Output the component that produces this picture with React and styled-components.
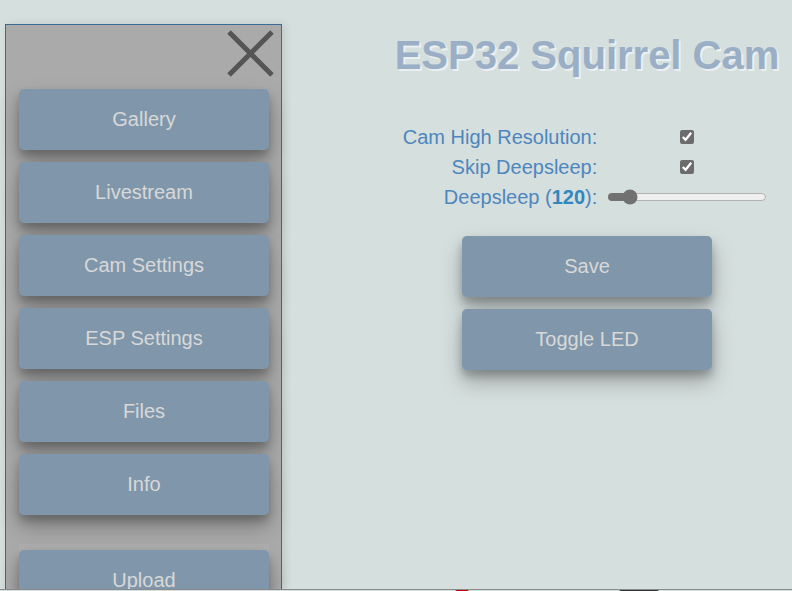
import React from "react";
import styled, { createGlobalStyle } from "styled-components";

const GlobalStyle = createGlobalStyle`
  html, body {
    margin: 0;
    padding: 0;
    background: #d5dfde;
    font-family: "Liberation Sans", Arial, sans-serif;
    overflow: hidden;
  }
`;

const Frame = styled.div`
  display: flex;
  height: 589px;
  overflow: hidden;
`;

const SideNav = styled.nav`
  flex: 0 0 277px;
  box-sizing: border-box;
  margin: 24px 0 0 5px;
  background: #aaaaaa;
  border: 1px solid #3b6a96;
  border-bottom: none;
  box-shadow: 3px 0 8px rgba(0, 0, 0, 0.1);
  display: flex;
  flex-direction: column;
  align-items: flex-start;
  padding: 0 12px 0 13px;

  & > * {
    flex-shrink: 0;
  }
`;

const NavHeader = styled.div`
  align-self: stretch;
  height: 64px;
  display: flex;
  justify-content: flex-end;
  align-items: flex-start;
  padding: 4px 0 0;
  margin-right: -6px;
  box-sizing: border-box;
`;

const CloseButton = styled.button`
  border: none;
  background: none;
  padding: 0;
  width: 49px;
  height: 49px;
  cursor: pointer;
`;

const Button = styled.button`
  width: 250px;
  height: 61px;
  flex: 0 0 61px;
  border: none;
  border-radius: 5px;
  background: #8097ab;
  color: #d8d8d8;
  font-family: "Liberation Sans", Arial, sans-serif;
  font-size: 20px;
  box-shadow: 0 12px 22px rgba(0, 0, 0, 0.26), 0 6px 8px rgba(0, 0, 0, 0.22);
  cursor: pointer;
  margin-bottom: ${props => (props.last ? "0" : "12px")};
`;

const UploadForm = styled.form`
  margin-top: 29px;
  padding-top: 6px;
  width: 250px;
  background: #adadad;
  display: flex;
  flex-direction: column;
`;

const Main = styled.main`
  flex: 1;
  padding-left: 100px;
  display: flex;
  flex-direction: column;
  align-items: center;
`;

const Title = styled.h1`
  margin: 32px 0 0;
  font-size: 40px;
  line-height: 46px;
  font-weight: bold;
  color: #9aafc5;
  text-shadow: 2px 2px 0 #eaeff1;
  white-space: nowrap;
`;

const SettingsGrid = styled.div`
  margin: 44px 4px 0 0;
  display: grid;
  grid-template-columns: auto 160px;
  column-gap: 10px;
  align-items: center;
`;

const Label = styled.label`
  text-align: right;
  font-size: 20px;
  line-height: 30px;
  color: #4e86bd;
  white-space: nowrap;

  b {
    color: #2f88bf;
  }
`;

const Control = styled.div`
  display: flex;
  justify-content: center;
  align-items: center;
  height: 30px;
`;

const Check = styled.input`
  margin: 0;
  width: 14px;
  height: 14px;
  accent-color: #6c6c6c;
`;

const Slider = styled.input`
  margin: 0;
  width: 160px;
  accent-color: #717171;
`;

const Actions = styled.div`
  margin-top: 24px;
  display: flex;
  flex-direction: column;
`;

const Footer = styled.div`
  height: 2px;
  border-top: 1px solid #8a8a8a;
  display: flex;
  gap: 150px;
  padding-left: 455px;
`;

const Blip = styled.span`
  width: ${props => props.w}px;
  height: 2px;
  background: ${props => props.color};
  border-radius: 2px 2px 0 0;
`;

const CloseIcon = () => (
  <svg width="49" height="49" viewBox="0 0 49 49">
    <path d="M3 3 L46 46 M46 3 L3 46" stroke="#555555" strokeWidth="5" />
  </svg>
);

const navItems = ["Gallery", "Livestream", "Cam Settings", "ESP Settings", "Files", "Info"];

export default function App() {
  return (
    <>
      <GlobalStyle />
      <Frame>
        <SideNav>
          <NavHeader>
            <CloseButton aria-label="close">
              <CloseIcon />
            </CloseButton>
          </NavHeader>
          {navItems.map((item, i) => (
            <Button key={item} last={i === navItems.length - 1}>
              {item}
            </Button>
          ))}
          <UploadForm>
            <Button last type="button">Upload</Button>
          </UploadForm>
        </SideNav>
        <Main>
          <Title>ESP32 Squirrel Cam</Title>
          <SettingsGrid>
            <Label>Cam High Resolution:</Label>
            <Control>
              <Check type="checkbox" defaultChecked />
            </Control>
            <Label>Skip Deepsleep:</Label>
            <Control>
              <Check type="checkbox" defaultChecked />
            </Control>
            <Label>
              Deepsleep (<b>120</b>):
            </Label>
            <Control>
              <Slider type="range" min="0" max="1200" defaultValue="120" />
            </Control>
          </SettingsGrid>
          <Actions>
            <Button>Save</Button>
            <Button last>Toggle LED</Button>
          </Actions>
        </Main>
      </Frame>
      <Footer>
        <Blip w={14} color="#c00000" />
        <Blip w={40} color="#333333" />
      </Footer>
    </>
  );
}
